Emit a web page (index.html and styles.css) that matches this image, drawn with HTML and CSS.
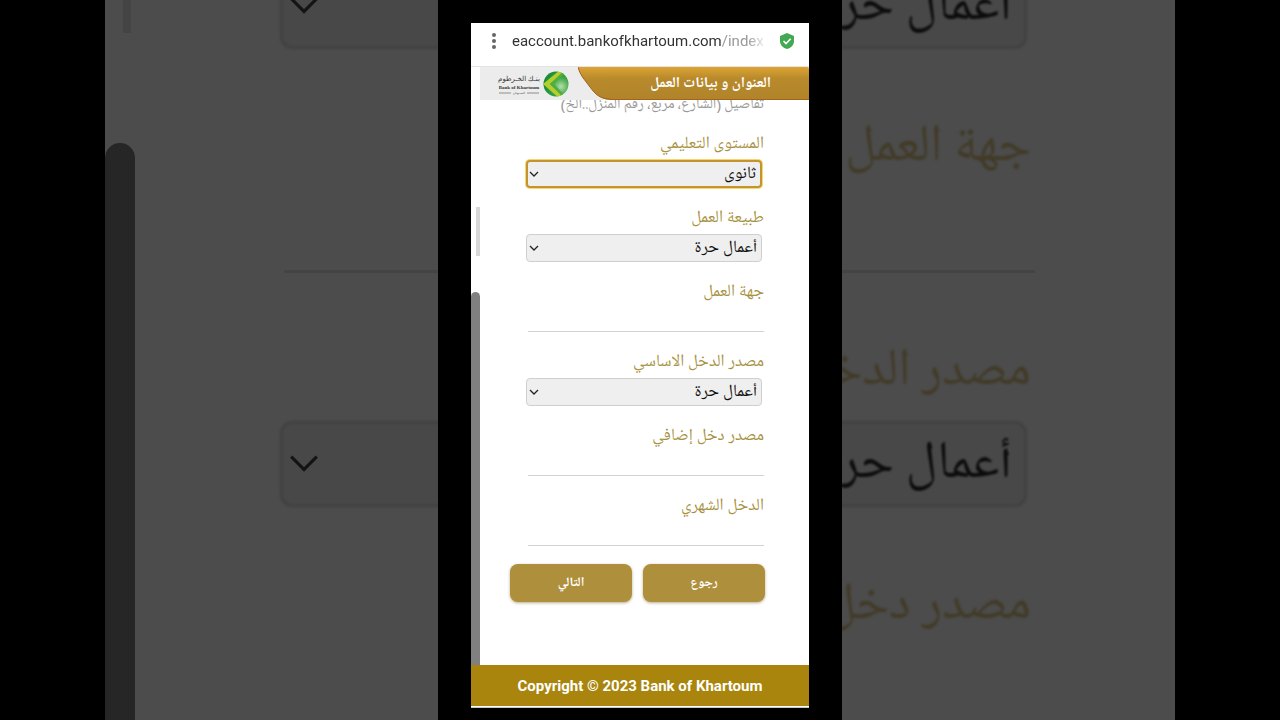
FILE: index.html
```html
<!DOCTYPE html>
<html lang="ar">
<head>
  <meta charset="UTF-8" />
  <meta name="viewport" content="width=device-width, initial-scale=1" />
  <title>العنوان و بيانات العمل - Bank of Khartoum</title>
  <link rel="stylesheet" href="styles.css">
</head>
<body>
  <div class="stage">

    <!-- Enlarged dimmed form behind the phone -->
    <div class="backdrop" aria-hidden="true">
      <div class="rail rail-big">
        <span class="mark"></span>
        <span class="thumb"></span>
      </div>
      <div class="big-form" dir="rtl">
        <div class="select-box">
          <select tabindex="-1" aria-label="طبيعة العمل"><option>أعمال حرة</option></select>
          <svg class="chevron" viewBox="0 0 10 10"><path d="M1 3l4 4 4-4" /></svg>
        </div>
        <label for="bigEmployer">جهة العمل</label>
        <input type="text" id="bigEmployer" tabindex="-1">
        <label for="bigSource">مصدر الدخـ</label>
        <div class="select-box">
          <select id="bigSource" tabindex="-1"><option>أعمال حرة</option></select>
          <svg class="chevron" viewBox="0 0 10 10"><path d="M1 3l4 4 4-4" /></svg>
        </div>
        <label for="bigExtra">مصدر دخل</label>
        <input type="text" id="bigExtra" tabindex="-1">
      </div>
    </div>

    <div class="column">
      <div class="phone">
        <div class="address-bar">
          <button class="menu-btn" aria-label="Menu">
            <svg viewBox="0 0 6 16"><circle cx="3" cy="2" r="2" /><circle cx="3" cy="8" r="2" /><circle cx="3" cy="14" r="2" /></svg>
          </button>
          <div class="url">eaccount.bankofkhartoum.com<span>/index</span></div>
          <svg class="shield" viewBox="0 0 14 16">
            <path d="M7 0l7 3v5c0 4-3 7-7 8-4-1-7-4-7-8V3z" fill="#43a852" />
            <path d="M3.500 8l2.500 2.500 4.700-4.700" fill="none" stroke="#fff" stroke-width="1.600" />
          </svg>
        </div>

        <div class="view">
          <div class="rail">
            <span class="mark"></span>
            <span class="thumb"></span>
          </div>

          <div class="page">
            <header class="page-header">
              <svg class="logo" viewBox="0 0 98 33" role="img" aria-label="Bank of Khartoum">
                <defs>
                  <radialGradient id="ball" cx="0.7" cy="0.6" r="0.7">
                    <stop offset="0" stop-color="#b5dfa8" />
                    <stop offset="0.5" stop-color="#3fa648" />
                    <stop offset="1" stop-color="#158a35" />
                  </radialGradient>
                  <clipPath id="ballClip"><circle cx="76" cy="17" r="12.500" /></clipPath>
                </defs>
                <text class="logo-ar" x="39" y="14">بنـك الخـرطوم</text>
                <text class="logo-en" x="39" y="22">Bank of Khartoum</text>
                <path d="M19 26h12M47 26h12" stroke="#777" stroke-width="0.800" />
                <text class="logo-sub" x="39" y="27">الســودان</text>
                <circle cx="76" cy="17" r="12.500" fill="url(#ball)" />
                <g clip-path="url(#ballClip)">
                  <path d="M80 3L63 17l17 15h5L70 17 85 3z" fill="#b4cf2d" />
                  <path d="M85 3L70 17l15 15h3L74 17 88 3z" fill="#4fae3c" />
                </g>
              </svg>
              <svg class="curve" viewBox="0 0 32 33" preserveAspectRatio="none">
                <defs>
                  <linearGradient id="gold" x1="0" y1="0" x2="0" y2="1">
                    <stop offset="0" stop-color="#dda433" />
                    <stop offset="0.35" stop-color="#b98a2c" />
                    <stop offset="1" stop-color="#b1842a" />
                  </linearGradient>
                </defs>
                <path d="M0 0h32v33C22 32 17 27 12 20 6 12 2 8 0 0z" fill="url(#gold)" />
                <path d="M0 0c2 8 6 12 12 20 5 7 10 12 20 12" fill="none" stroke="#a4621c" />
              </svg>
              <h1 dir="rtl">العنوان و بيانات العمل</h1>
            </header>

            <form dir="rtl">
              <input class="details" type="text" aria-label="تفاصيل" placeholder="تفاصيل (الشارع، مربع، رقم المنزل..الخ)">

              <div class="field">
                <label for="education">المستوى التعليمي</label>
                <div class="select-box active">
                  <select id="education"><option>ثانوى</option></select>
                  <svg class="chevron" viewBox="0 0 10 10"><path d="M1 3l4 4 4-4" /></svg>
                </div>
              </div>
              <div class="field">
                <label for="work">طبيعة العمل</label>
                <div class="select-box">
                  <select id="work"><option>أعمال حرة</option></select>
                  <svg class="chevron" viewBox="0 0 10 10"><path d="M1 3l4 4 4-4" /></svg>
                </div>
              </div>
              <div class="field">
                <label for="employer">جهة العمل</label>
                <input type="text" id="employer">
              </div>
              <div class="field">
                <label for="source">مصدر الدخل الاساسي</label>
                <div class="select-box">
                  <select id="source"><option>أعمال حرة</option></select>
                  <svg class="chevron" viewBox="0 0 10 10"><path d="M1 3l4 4 4-4" /></svg>
                </div>
              </div>
              <div class="field">
                <label for="extra">مصدر دخل إضافي</label>
                <input type="text" id="extra">
              </div>
              <div class="field">
                <label for="income">الدخل الشهري</label>
                <input type="text" id="income">
              </div>

              <div class="actions">
                <button type="button" class="btn">رجوع</button>
                <button type="button" class="btn">التالي</button>
              </div>
            </form>
          </div>
        </div>

        <footer>Copyright © 2023 Bank of Khartoum</footer>
      </div>
    </div>

  </div>
</body>
</html>
```
FILE: styles.css
```css
* {
  box-sizing: border-box;
}
body {
  margin: 0;
  background: #000;
  font-family: "Noto Naskh Arabic UI", "Noto Sans Arabic", "DejaVu Sans", sans-serif;
}
button, input, select {
  font-family: inherit;
}
.stage {
  display: grid;
  justify-items: center;
  height: 100vh;
  min-height: 720px;
  overflow: hidden;
}
.backdrop, .column {
  grid-area: 1 / 1;
}

/* shared form pieces */
label {
  display: block;
  color: #a8923f;
  font-size: 17px;
  line-height: 24px;
}
input {
  display: block;
  width: 100%;
  height: 28px;
  padding: 0;
  border: 0;
  border-bottom: 1px solid #d2d2d2;
  background: none;
  font-size: 15px;
}
.select-box {
  position: relative;
}
select {
  display: block;
  width: 100%;
  height: 28px;
  padding: 0 4px;
  appearance: none;
  background: #efefef;
  border: 1px solid #cfcfcf;
  border-radius: 4px;
  color: #111;
  font-size: 17px;
  line-height: 24px;
}
.chevron {
  position: absolute;
  left: 3px;
  top: 50%;
  width: 10px;
  height: 10px;
  margin-top: -5px;
  fill: none;
  stroke: #222;
  stroke-width: 1.3;
  pointer-events: none;
}
.rail {
  display: flex;
  flex-direction: column;
}
.mark {
  align-self: flex-end;
  width: 4px;
  height: 49px;
  margin: 140px 0 36px;
  background: #d8d8d8;
}
.thumb {
  flex: 1;
  background: #808080;
  border-radius: 5px 5px 0 0;
}

/* backdrop */
.backdrop {
  display: flex;
  width: 84%;
  max-width: 1070px;
  overflow: hidden;
  background: #4c4c4c;
}
.rail-big {
  width: 30px;
}
.rail-big .mark {
  width: 8px;
  height: 33px;
  margin: 0 4px 110px;
  background: #444;
}
.rail-big .thumb {
  background: #262626;
  border-radius: 15px 15px 0 0;
}
.big-form {
  flex: 1;
  margin-top: -37px;
  padding: 0 140px 0 149px;
}
.big-form label {
  margin: 74px 4px 0;
  color: #423b28;
  font-size: 52px;
  line-height: 48px;
  filter: blur(1px);
}
.big-form input {
  height: 102px;
  border-bottom: 3px solid #444;
}
.big-form .select-box {
  margin: 0 8px 0 -4px;
}
.big-form label + .select-box {
  margin-top: 26px;
}
.big-form select {
  height: 86px;
  padding: 0 12px;
  background: #484848;
  border: 3px solid #424242;
  border-radius: 12px;
  color: #0c0c0c;
  font-size: 53px;
  line-height: 80px;
  filter: blur(1px);
}
.big-form .chevron {
  left: 8px;
  width: 32px;
  height: 32px;
  margin-top: -17px;
  stroke: #141414;
  stroke-width: 1;
}

/* phone */
.column {
  z-index: 1;
  width: 404px;
  max-width: 100%;
  padding: 23px 33px 12px;
  background: #000;
}
.phone {
  display: flex;
  flex-direction: column;
  min-height: 100%;
  background: #fff;
}
.address-bar {
  display: flex;
  align-items: center;
  height: 44px;
  padding: 0 15px 8px 20px;
  border-bottom: 1px solid #e4e4e4;
}
.menu-btn {
  width: 6px;
  height: 16px;
  padding: 0;
  border: 0;
  background: none;
  fill: #666;
}
.menu-btn svg {
  display: block;
}
.url {
  flex: 1;
  margin: 0 12px 0 15px;
  overflow: hidden;
  white-space: nowrap;
  color: #333;
  font-family: Roboto, sans-serif;
  font-size: 15px;
  line-height: 20px;
  mask-image: linear-gradient(to right, #000 92%, transparent);
}
.url span {
  color: #999;
}
.shield {
  width: 14px;
  height: 16px;
}
.view {
  flex: 1;
  display: flex;
}
.view > .rail {
  width: 9px;
}
.page {
  flex: 1;
}
.page-header {
  position: relative;
  display: flex;
  height: 33px;
  background: #ececec;
}
.logo {
  width: 98px;
}
.logo text {
  text-anchor: middle;
  fill: #333;
  font-family: "Liberation Serif", "DejaVu Sans", serif;
}
.logo .logo-ar {
  font-size: 7px;
}
.logo .logo-en {
  font-size: 5px;
  font-weight: bold;
}
.logo .logo-sub {
  font-size: 3px;
}
.curve {
  width: 32px;
}
h1 {
  flex: 1;
  margin: 0;
  padding-right: 38px;
  background: linear-gradient(#dda433, #b98a2c 35%, #b1842a);
  border-bottom: 1px solid #a4621c;
  border-radius: 0 2px 0 0;
  color: #fff;
  font-size: 15px;
  line-height: 32px;
}
form {
  padding: 0 45px 61px 48px;
}
.details {
  height: 24px;
  margin: -8px 0 16px;
  border: 0;
  font-size: 15px;
}
.details::placeholder {
  color: #999;
}
.field {
  margin-bottom: 18px;
}
.field .select-box {
  margin: 4px 2px 0 -2px;
}
.active select {
  border: 2px solid #c4952c;
  box-shadow: 0 0 0 1px #f4d774;
}
.actions {
  display: flex;
  gap: 11px;
  margin: 0 -1px 0 -18px;
}
.btn {
  flex: 1;
  height: 38px;
  border: 0;
  border-radius: 8px;
  background: #ae8f3b;
  box-shadow: 0 1px 3px rgba(120, 90, 20, 0.5);
  color: #fff;
  font-size: 13px;
  font-weight: bold;
}
footer {
  padding: 11px 0;
  background: #a9850d;
  border-bottom: 1px solid #ccc;
  box-shadow: inset 0 -1px #fff;
  color: #fff;
  font-family: Roboto, sans-serif;
  font-size: 15px;
  font-weight: bold;
  line-height: 20px;
  text-align: center;
}
```
